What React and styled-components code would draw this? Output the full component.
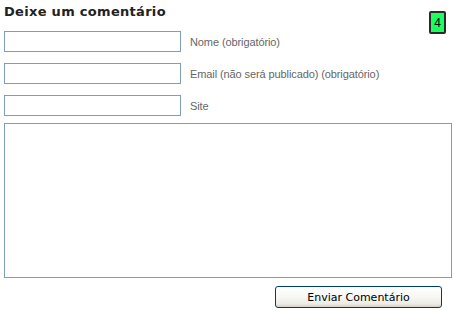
import React from "react"
import styled, { createGlobalStyle } from "styled-components"

const GlobalStyle = createGlobalStyle`
  html, body {
    margin: 0;
    padding: 0;
    background: #fff;
  }
  body {
    font-family: "Liberation Sans", Arial, sans-serif;
  }
`

const Wrapper = styled.section`
  position: relative;
  width: 454px;
  height: 310px;
  box-sizing: border-box;
  padding: 0 2px 0 4px;
`

const Title = styled.h3`
  margin: 0;
  padding-top: 3px;
  height: 28px;
  box-sizing: border-box;
  font-family: "DejaVu Sans", Verdana, sans-serif;
  font-size: 13px;
  line-height: 17px;
  font-weight: 700;
  letter-spacing: 0.3px;
  color: #222;
`

const Badge = styled.span`
  position: absolute;
  top: 11px;
  right: 8px;
  width: 17px;
  height: 23px;
  box-sizing: border-box;
  display: flex;
  align-items: center;
  justify-content: center;
  background: #1cff5e;
  border: 2px solid #2a2a2a;
  border-radius: 2px;
  font-family: "Liberation Sans", Arial, sans-serif;
  font-size: 12px;
  color: #000;
`

const Form = styled.form`
  display: flex;
  flex-direction: column;
  padding-top: 3px;
`

const Row = styled.div`
  display: flex;
  align-items: center;
  gap: 9px;
  margin-bottom: ${(p) => p.$gap || 11}px;
`

const Field = styled.input`
  width: 177px;
  height: 21px;
  box-sizing: border-box;
  margin: 0;
  padding: 2px 3px;
  border: 1px solid #7f9db9;
  background: #fff;
  font-size: 11px;
  outline: none;
`

const Label = styled.label`
  font-family: "Liberation Sans", Arial, sans-serif;
  font-size: 11px;
  letter-spacing: -0.1px;
  color: #666;
`

const Message = styled.textarea`
  width: 448px;
  height: 155px;
  box-sizing: border-box;
  margin: 0;
  border: 1px solid #7f9db9;
  resize: none;
  outline: none;
`

const Actions = styled.div`
  display: flex;
  justify-content: flex-end;
  padding: 8px 10px 0 0;
`

const SubmitButton = styled.button`
  width: 167px;
  height: 22px;
  box-sizing: border-box;
  padding: 0;
  border: 1px solid #003c74;
  border-radius: 3px;
  background: linear-gradient(#ffffff 0%, #f7f7f4 50%, #ecebe4 85%, #d6d0c5 100%);
  font-family: "DejaVu Sans", Verdana, sans-serif;
  font-size: 11px;
  color: #000;
  cursor: pointer;
`

const fields = [
  { id: "author", label: "Nome (obrigatório)" },
  { id: "email", label: "Email (não será publicado) (obrigatório)" },
  { id: "url", label: "Site", gap: 7 },
]

const App = () => {
  return (
    <Wrapper>
      <GlobalStyle />
      <Title>Deixe um comentário</Title>
      <Badge>4</Badge>
      <Form onSubmit={(e) => e.preventDefault()}>
        {fields.map((f) => (
          <Row key={f.id} $gap={f.gap}>
            <Field id={f.id} type="text" />
            <Label htmlFor={f.id}>{f.label}</Label>
          </Row>
        ))}
        <Message />
        <Actions>
          <SubmitButton type="submit">Enviar Comentário</SubmitButton>
        </Actions>
      </Form>
    </Wrapper>
  )
}

export default App
